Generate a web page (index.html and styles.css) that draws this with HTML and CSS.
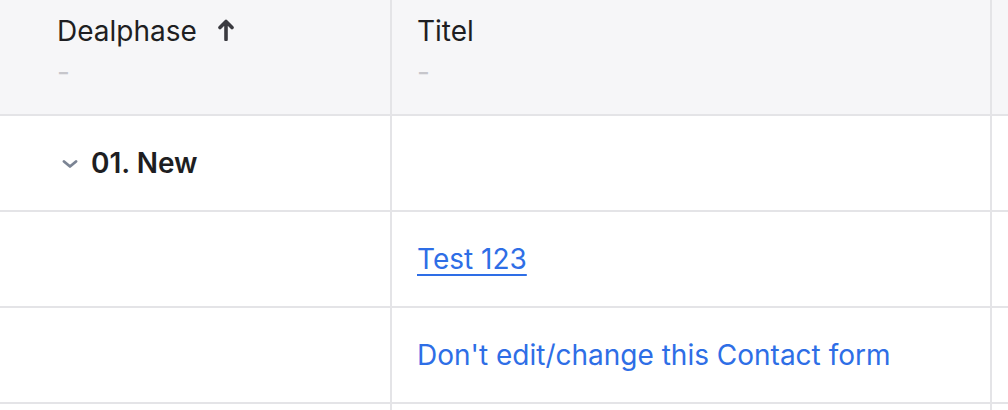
FILE: index.html
```html
<!DOCTYPE html>
<html lang="en">
<head>
    <meta charset="UTF-8">
    <meta name="viewport" content="width=device-width, initial-scale=1.0">
    <title>Deals</title>
    <link rel="stylesheet" href="styles.css">
</head>
<body>
    <div class="grid">
        <!-- header row -->
        <div class="row head">
            <div class="cell first">
                <div class="head-title">
                    <span>Dealphase</span>
                    <svg class="sort" viewBox="0 0 16 22" width="16" height="22">
                        <path d="M8 20.5V3 M2 8.5L8 2.5L14 8.5" fill="none" stroke="#3a3a40" stroke-width="3.6" stroke-linecap="round" stroke-linejoin="round"/>
                    </svg>
                </div>
                <div class="head-sub">-</div>
            </div>
            <div class="cell">
                <div class="head-title"><span>Titel</span></div>
                <div class="head-sub">-</div>
            </div>
            <div class="cell last"></div>
        </div>

        <!-- group row -->
        <div class="row">
            <div class="cell first group">
                <svg class="chevron" viewBox="0 0 16 8" width="16" height="8">
                    <path d="M2 1.5L8 6.5L14 1.5" fill="none" stroke="#7b8494" stroke-width="2.8" stroke-linecap="round" stroke-linejoin="round"/>
                </svg>
                <span>01. New</span>
            </div>
            <div class="cell"></div>
            <div class="cell last"></div>
        </div>

        <div class="row">
            <div class="cell first"></div>
            <div class="cell"><a href="#" class="link underline">Test 123</a></div>
            <div class="cell last"></div>
        </div>

        <div class="row">
            <div class="cell first"></div>
            <div class="cell"><a href="#" class="link">Don't edit/change this Contact form</a></div>
            <div class="cell last"></div>
        </div>

        <!-- next row, cut off by the viewport -->
        <div class="row tail">
            <div class="cell first"></div>
            <div class="cell"></div>
            <div class="cell last"></div>
        </div>
    </div>
</body>
</html>
```

FILE: styles.css
```css
body {
    margin: 0;
    font-family: Inter, 'Noto Sans', sans-serif;
    font-size: 28px;
    color: #1e1e22;
    background: #ffffff;
    overflow: hidden;
}

.grid {
    width: 1008px;
    height: 410px;
    overflow: hidden;
}

.row {
    display: grid;
    grid-template-columns: 392px 600px 1fr;
    height: 96px;
}

.cell {
    box-sizing: border-box;
    border-right: 2px solid #e4e4e7;
    border-bottom: 2px solid #e4e4e7;
    padding-left: 25px;
    display: flex;
    align-items: center;
}

.cell.first {
    padding-left: 57px;
}

.cell.last {
    border-right: none;
}

.head {
    height: 116px;
    background: #f6f6f8;
}

.head .cell {
    flex-direction: column;
    align-items: flex-start;
    justify-content: flex-start;
    padding-top: 12px;
}

.head-title {
    display: flex;
    align-items: center;
    gap: 21px;
    line-height: 38px;
    height: 38px;
}

.sort {
    margin-top: -2px;
}

.head-sub {
    color: #c6c6cb;
    line-height: 38px;
    margin-top: 3px;
}

.cell.group {
    font-weight: 600;
    gap: 13px;
    padding-left: 62px;
}

.chevron {
    margin-top: 2px;
}

.link {
    color: #2e6ee6;
    text-decoration: none;
}

.link.underline {
    text-decoration: underline;
    text-underline-offset: 5px;
    text-decoration-thickness: 2px;
}

.row.tail {
    height: 6px;
}

.row.tail .cell {
    border-bottom: none;
}
```
